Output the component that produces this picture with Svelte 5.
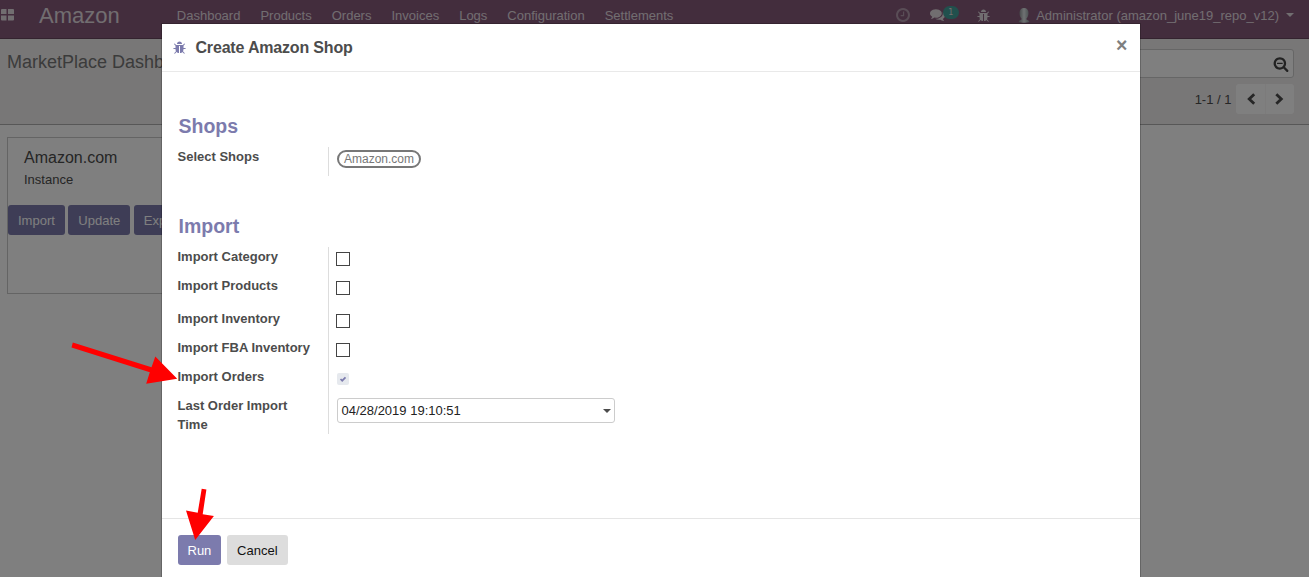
<script>
  const menu = ['Dashboard', 'Products', 'Orders', 'Invoices', 'Logs', 'Configuration', 'Settlements'];
  const options = [
    { label: 'Import Category', height: 29 },
    { label: 'Import Products', height: 33 },
    { label: 'Import Inventory', height: 29 },
    { label: 'Import FBA Inventory', height: 29 },
    { label: 'Import Orders', height: 29, checked: true }
  ];
</script>

{#snippet bug()}
  <svg class="bug" viewBox="0 0 1792 1792"><path fill="currentColor" d="M1632 1088q0 26-19 45t-45 19h-224q0 171-67 290l208 209q19 19 19 45t-19 45q-18 19-45 19t-45-19l-198-197q-5 5-15 13t-42 28.500-65 36.500-82 29-97 13v-896h-128v896q-51 0-101.500-13.500t-87-33-66-39-43.500-32.500l-15-14-183 207q-20 21-48 21-24 0-43-16-19-18-20.500-44.500t15.500-46.500l202-227q-58-114-58-274h-224q-26 0-45-19t-19-45 19-45 45-19h224v-294l-173-173q-19-19-19-45t19-45 45-19 45 19l173 173h844l173-173q19-19 45-19t45 19 19 45-19 45l-173 173v294h224q26 0 45 19t19 45zm-480-576h-640q0-133 93.500-226.500t226.500-93.500 226.500 93.500 93.500 226.500z" /></svg>
{/snippet}

<div class="screen">
  <header class="navbar">
    <svg class="apps" viewBox="0 0 13 12"><path fill="currentColor" d="M1 0h4.500v5H0V1q0-1 1-1zM7 0h5q1 0 1 1v4H7zM0 6.500h5.500v5H1q-1 0-1-1zM7 6.500h6v4q0 1-1 1H7z" /></svg>
    <span class="brand">Amazon</span>
    <nav>{#each menu as item}<span>{item}</span>{/each}</nav>
    <div class="systray">
      <svg class="clock" viewBox="0 0 1536 1536"><path fill="currentColor" transform="translate(-128 -128)" d="M1024 544v448q0 14-9 23t-23 9h-320q-14 0-23-9t-9-23v-64q0-14 9-23t23-9h224v-352q0-14 9-23t23-9h64q14 0 23 9t9 23zm416 352q0-148-73-273t-198-198-273-73-273 73-198 198-73 273 73 273 198 198 273 73 273-73 198-198 73-273zm224 0q0 209-103 385.500t-279.500 279.500-385.500 103-385.500-103-279.500-279.500-103-385.500 103-385.500 279.500-279.500 385.500-103 385.500 103 279.500 279.500 103 385.500z" /></svg>
      <div class="chat">
        <svg viewBox="0 0 1792 1792"><path fill="currentColor" d="M1408 768q0 139-94 257t-256.500 186.500-353.500 68.500q-86 0-176-16-124 88-278 128-36 9-86 16h-3q-11 0-20.500-8t-11.500-21q-1-3-1-6.500t.5-6.500 2-6l2.500-5 3.500-5.500 4-5 4.500-5 4-4.500q5-6 23-25t26-29.500 22.500-29 25-38.500 20.500-44q-124-72-195-177t-71-224q0-139 94-257t256.500-186.500 353.500-68.500 353.500 68.500 256.500 186.500 94 257zm384 256q0 120-71 224.500t-195 176.500q10 24 20.500 44t25 38.500 22.500 29 26 29.500 23 25q1 1 4 4.500t4.500 5 4 5 3.500 5.500l2.500 5 2 6 .5 6.500-1 6.500q-3 14-13 22t-22 7q-50-7-86-16-154-40-278-128-90 16-176 16-271 0-472-132 58 4 88 4 161 0 309-45t264-129q125-92 192-212t67-254q0-77-23-152 129 71 204 178t75 230z" /></svg>
        <span class="badge">1</span>
      </div>
      {@render bug()}
      <svg class="avatar" viewBox="0 0 14 16">
        <defs><linearGradient id="face"><stop offset="0" stop-color="#7d8486" /><stop offset=".5" stop-color="#dfe5e7" /><stop offset="1" stop-color="#8c989c" /></linearGradient></defs>
        <path fill="url(#face)" d="M7 1c3 0 4.500 2 4.500 5 0 2.500-.8 4.500-2 5.500v1c1 .7 2.500.7 3 2.500-3 1-8 1-11 0 .5-1.800 2-1.800 3-2.500v-1C3.300 10.500 2.500 8.500 2.500 6c0-3 1.500-5 4.500-5z" />
      </svg>
      <span class="user">Administrator (amazon_june19_repo_v12)</span>
      <i class="caret"></i>
    </div>
  </header>

  <section class="control">
    <h1>MarketPlace Dashboard</h1>
    <div class="tools">
      <div class="search">
        <svg viewBox="0 0 1792 1792"><path fill="currentColor" d="M1088 800v64q0 13-9.500 22.500t-22.500 9.500h-576q-13 0-22.500-9.500t-9.500-22.500v-64q0-13 9.500-22.500t22.500-9.500h576q13 0 22.500 9.500t9.500 22.500zm128 32q0-185-131.500-316.500t-316.500-131.500-316.500 131.500-131.500 316.500 131.500 316.500 316.500 131.500 316.500-131.500 131.500-316.500zm512 832q0 53-37.500 90.500t-90.500 37.500q-54 0-90-38l-343-342q-179 124-399 124-143 0-273.500-55.500t-225-150-150-225-55.500-273.500 55.500-273.500 150-225 225-150 273.500-55.500 273.500 55.500 225 150 150 225 55.500 273.500q0 220-124 399l343 343q37 37 37 90z" /></svg>
      </div>
      <div class="pager">
        <span>1-1 / 1</span>
        <div class="arrows">
          <b><svg viewBox="0 0 10 12"><path d="M8.200 1.200 3.200 6l5 4.800" /></svg></b>
          <b><svg viewBox="0 0 10 12"><path d="M1.300 1.200 6.300 6l-5 4.800" /></svg></b>
        </div>
      </div>
    </div>
  </section>

  <main>
    <article class="card">
      <h2>Amazon.com</h2>
      <p>Instance</p>
      <div class="actions"><span class="btn primary">Import</span><span class="btn primary">Update</span><span class="btn primary">Export</span></div>
    </article>
  </main>

  <div class="overlay">
    <div class="dialog">
      <header class="dialog-head">{@render bug()}<h3>Create Amazon Shop</h3><span class="close">×</span></header>
      <div class="dialog-body">
        <h4>Shops</h4>
        <div class="field shops"><strong>Select Shops</strong><div class="value"><span class="tag">Amazon.com</span></div></div>
        <h4 class="second">Import</h4>
        {#each options as option}
          <div class="field" style="height: {option.height}px">
            <strong>{option.label}</strong>
            <div class="value">
              {#if option.checked}
                <span class="checked"><svg viewBox="0 0 12 12"><path d="m3.500 6 1.700 1.700 3.300-3.300" /></svg></span>
              {:else}
                <span class="box"></span>
              {/if}
            </div>
          </div>
        {/each}
        <div class="field time"><strong>Last Order Import Time</strong><div class="value"><div class="date">04/28/2019 19:10:51<i class="caret"></i></div></div></div>
      </div>
      <footer><span class="btn primary">Run</span><span class="btn cancel">Cancel</span></footer>
    </div>
  </div>

  <svg class="pointers" viewBox="0 0 1309 577">
    <path d="M72.800 342.600 151.500 367.200l3.800-10.700 21.900 22.300-31 5 3.600-11.600-78.300-24.600zM201.700 488.700l4.700.8-3.700 24.700 11.200 1.700L195.200 540 186 510.500l11.700 2.300z" />
  </svg>
</div>

<style>
  :global(body) { margin: 0; }
  .screen { position: relative; height: 577px; overflow: hidden; display: flex; flex-direction: column; background: #fff; color: #4c4c4c; font: 13px/19.500px "Liberation Sans", Arial, sans-serif; box-sizing: border-box; }
  .screen * { box-sizing: border-box; }
  svg { display: block; flex: none; }
  h1, h2, h3, h4, p { margin: 0; }
  .navbar { height: 39px; flex: none; display: flex; align-items: flex-start; background: #875a7b; border-bottom: 1px solid #68465f; color: #e3dce1; }
  .apps { width: 13px; height: 12px; margin: 9px 0 0 .5px; }
  .brand { font-size: 22px; line-height: 31px; width: 138px; padding-left: 25.500px; }
  nav { display: flex; gap: 20px; padding-top: 6px; margin-left: 25.300px; }
  .systray { display: flex; margin-left: auto; padding-right: 15px; }
  .clock { width: 14px; height: 14px; margin-top: 7.500px; color: #b39aad; }
  .chat { display: flex; margin: 7px 18.500px 0 19.500px; }
  .chat svg { width: 15px; height: 15px; }
  .badge { width: 16px; height: 13px; margin: -1px 0 0 -2px; border-radius: 7px; background: #42a09a; font: 8px/13px "DejaVu Sans", sans-serif; text-align: center; }
  .bug { width: 14px; height: 14px; }
  .systray .bug { margin-top: 8px; }
  .avatar { width: 14px; height: 16px; margin: 7px 5px 0 26px; }
  .user { margin-top: 6px; }
  .caret { display: block; border: 4px solid transparent; border-top-color: currentColor; border-bottom: 0; }
  .systray .caret { margin: 13px 0 0 7px; }
  .control { height: 86px; flex: none; display: flex; justify-content: space-between; background: #f0eeee; border-bottom: 1px solid #afafaf; }
  h1 { font-size: 18px; line-height: 27px; font-weight: 400; color: #777; padding: 10px 0 0 7px; }
  .tools { width: 620px; padding: 10px 15px 0 0; }
  .search { height: 29px; border: 1px solid #ccc; border-radius: 3px; background: #fff; display: flex; justify-content: flex-end; padding: 6px 4.500px 0; color: #444; }
  .search svg { width: 16px; height: 16px; }
  .pager { display: flex; justify-content: flex-end; margin-top: 6px; line-height: 32px; gap: 4.500px; }
  .arrows { display: flex; height: 30px; width: 58px; background: #fff; border-radius: 3px; }
  .arrows b { width: 29px; display: grid; place-items: center; }
  .arrows b + b { border-left: 1px solid #f8f7f7; }
  .arrows svg { width: 10px; height: 12px; fill: none; stroke: #4c4c4c; stroke-width: 2.800; }
  main { flex: 1; padding: 12px 7px; }
  .card { width: 300px; height: 157px; border: 1px solid #c8c8c8; padding-top: 7px; }
  h2 { font-size: 16px; line-height: 26px; font-weight: 400; padding-left: 16px; }
  .card p { line-height: 18px; padding-left: 16px; }
  .actions { display: flex; gap: 3.500px; margin-top: 16px; }
  .btn { display: block; height: 30px; border-radius: 3px; padding: 0 10px; line-height: 32px; }
  .primary { background: #7c7bad; color: #fff; }
  .overlay { position: absolute; inset: 0; background: rgba(0, 0, 0, .5); display: flex; justify-content: center; padding-top: 24px; }
  .dialog { width: 978px; margin-right: 7px; background: #fff; height: 600px; display: flex; flex-direction: column; box-shadow: 0 0 0 1px rgba(0, 0, 0, .2); }
  .dialog-head { height: 48px; flex: none; border-bottom: 1px solid #e9e9e9; display: flex; padding: 0 12.500px 0 11px; color: #7c7bad; }
  .dialog-head .bug { margin-top: 15.500px; width: 14px; height: 14px; }
  h3 { font-size: 16px; line-height: 24px; margin: 12px 0 0 8.500px; color: #4c4c4c; letter-spacing: -.18px; }
  .close { margin-left: auto; color: #7f7f7f; font: bold 19.500px/20px "Liberation Sans", sans-serif; padding-top: 11px; }
  .dialog-body { height: 446px; flex: none; padding: 39px 16px 0 15.500px; }
  h4 { font-size: 19.500px; line-height: 30px; height: 36px; color: #7c7bad; padding-left: 1px; }
  .second { margin-top: 35px; }
  .field { display: flex; }
  .field strong { width: 150.500px; padding-right: 16px; line-height: 19px; }
  .value { border-left: 1px solid #ddd; flex: 1; padding-left: 8px; }
  .shops { height: 29px; }
  .tag { display: block; width: 84px; height: 18px; margin-top: 3px; border: 2px solid #777; border-radius: 9px; font-size: 12px; line-height: 14px; text-align: center; color: #777; }
  .box { display: block; width: 14px; height: 14px; border: 1px solid #444; margin: 5px 0 0 -1px; }
  .checked { display: block; width: 12px; height: 12px; margin-top: 6px; border-radius: 2px; background: #e6e9ee; }
  .checked path { fill: none; stroke: #7c7bad; stroke-width: 1.700; }
  .time { height: 38px; }
  .date { width: 278px; height: 25px; margin-top: 2px; border: 1px solid #ccc; border-radius: 3px; padding: 0 3px 0 3.500px; display: flex; justify-content: space-between; align-items: center; color: #222; }
  .date .caret { color: #4c4c4c; }
  footer { border-top: 1px solid #e5e5e5; flex: 1; display: flex; gap: 6px; padding: 16px; }
  footer .btn { padding: 0 9.500px; }
  footer .cancel { background: #ddd; color: #111; padding: 0 10.200px; }
  .pointers { position: absolute; inset: 0; width: 1309px; height: 577px; fill: #f00; }
</style>
